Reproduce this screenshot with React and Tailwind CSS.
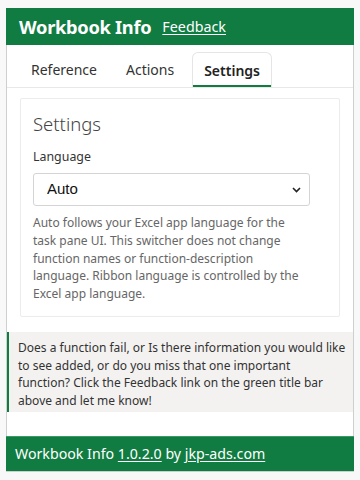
import React from 'react';

const font = { fontFamily: '"Noto Sans", "Open Sans", Arial, sans-serif' };

const Tab = ({ label, active }) => (
  <div
    className={
      active
        ? 'h-[35px] px-[11px] flex items-center border border-b-0 border-[#e5e5e5] rounded-t-[6px] text-[14px] font-semibold text-[#222] relative'
        : 'h-[35px] px-[11px] flex items-center text-[14px] text-[#333]'
    }
  >
    {label}
    {active && <div className="absolute left-0 right-0 bottom-0 h-[2px] bg-[#107c41]" />}
  </div>
);

export default function App() {
  return (
    <div className="min-h-[480px] bg-[#f8f8f8] pt-[8px] pl-[6px]" style={font}>
      <div className="w-[348px] h-[464px] bg-white border border-[#cfcfcf] border-t-0 flex flex-col">
        <header className="h-[37px] bg-[#107c41] flex items-center pl-[13px] gap-[11px] -mx-px">
          <h1 className="text-[18.3px] font-bold text-white tracking-[-0.3px]">Workbook Info</h1>
          <a href="#" className="text-[14.3px] text-white underline underline-offset-2">Feedback</a>
        </header>

        <nav className="pt-[7px] pl-[13px] flex gap-[7px] border-b border-[#e8e8e8]">
          <Tab label="Reference" />
          <Tab label="Actions" />
          <Tab label="Settings" active />
        </nav>

        <div className="px-[13px] pt-[10px]">
          <section className="border border-[#ececec] rounded-[2px] px-[12px] pt-[12px] pb-[13px]">
            <h2 className="text-[18.5px] font-light text-[#444] leading-[26px]">Settings</h2>
            <label className="block mt-[11px] text-[12.4px] text-[#333] leading-[18px]">Language</label>
            <div className="relative mt-[7px] w-[277px]">
              <select
                className="appearance-none w-full h-[33px] border border-[#d4d4d4] rounded-[3px] bg-white pl-[13px] text-[15px] text-[#111] outline-none"
                style={{ fontFamily: '"Liberation Sans", Arial, sans-serif' }}
                defaultValue="auto"
              >
                <option value="auto">Auto</option>
              </select>
              <svg className="absolute right-[9px] top-[14px] w-[9px] h-[6px] pointer-events-none" viewBox="0 0 9 6" fill="none" stroke="#222" strokeWidth="1.6">
                <path d="M1 1l3.5 3.5L8 1" />
              </svg>
            </div>
            <p className="mt-[8px] w-[277px] text-[12px] leading-[17.8px] text-[#666]">
              Auto follows your Excel app language for the task pane UI. This switcher does not change function names or function-description language. Ribbon language is controlled by the Excel app language.
            </p>
          </section>
        </div>

        <div className="mt-[15px] bg-[#f3f2f1] border-l-2 border-[#107c41] pl-[9px] pr-[4px] pt-[7px] pb-[3px] text-[12px] leading-[17.6px] text-[#333]">
          Does a function fail, or Is there information you would like to see added, or do you miss that one important<br />
          function? Click the Feedback link on the green title bar above and let me know!
        </div>

        <footer className="mt-auto h-[35px] bg-[#107c41] border-t border-[#3a9a63] flex items-center pl-[9px] text-[14.2px] text-white -mx-px">
          Workbook Info&nbsp;<a href="#" className="underline underline-offset-2">1.0.2.0</a>&nbsp;by&nbsp;<a href="#" className="underline underline-offset-2">jkp-ads.com</a>
        </footer>
      </div>
    </div>
  );
}
